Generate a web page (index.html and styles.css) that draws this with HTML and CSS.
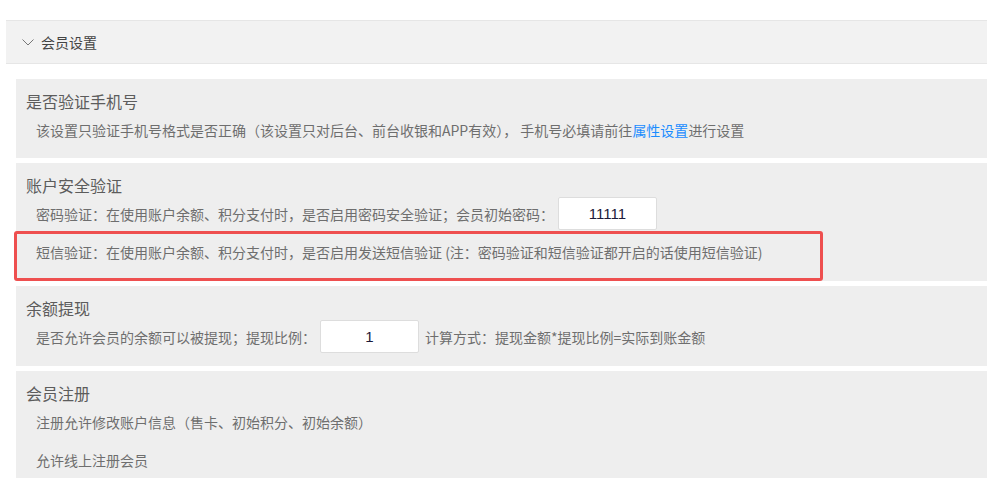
FILE: index.html
```html
<!DOCTYPE html>
<html>
<head>
    <title>会员设置</title>
    <link rel="stylesheet" href="styles.css">
</head>
<body>
    <div class="panel-head">
        <svg class="chevron" width="12" height="7" viewBox="0 0 12 7">
            <path d="M0.5 0.5 L6 6 L11.5 0.5" fill="none" stroke="#777" stroke-width="1"/>
        </svg>
        <span>会员设置</span>
    </div>

    <div class="sections">
        <div class="section">
            <div class="section-title">是否验证手机号</div>
            <div class="row">该设置只验证手机号格式是否正确（该设置只对后台、前台收银和APP有效）， 手机号必填请前往<a class="link" href="#">属性设置</a>进行设置</div>
        </div>

        <div class="section section-tight">
            <div class="section-title">账户安全验证</div>
            <div class="row row-input">
                <span>密码验证：在使用账户余额、积分支付时，是否启用密码安全验证；会员初始密码：</span>
                <input class="field" type="text" value="11111">
            </div>
            <div class="row highlight">短信验证：在使用账户余额、积分支付时，是否启用发送短信验证 (注：密码验证和短信验证都开启的话使用短信验证)</div>
        </div>

        <div class="section section-ratio">
            <div class="section-title">余额提现</div>
            <div class="row row-input">
                <span>是否允许会员的余额可以被提现；提现比例：</span>
                <input class="field field-ratio" type="text" value="1">
                <span>计算方式：提现金额*提现比例=实际到账金额</span>
            </div>
        </div>

        <div class="section">
            <div class="section-title">会员注册</div>
            <div class="row">注册允许修改账户信息（售卡、初始积分、初始余额）</div>
            <div class="row row-last">允许线上注册会员</div>
        </div>
    </div>
</body>
</html>
```

FILE: styles.css
```css
body {
    margin: 0;
    padding: 0;
    background: #ffffff;
    font-family: "Noto Sans CJK SC", "Microsoft YaHei", sans-serif;
    color: #6e6e6e;
    overflow: hidden;
}

.panel-head {
    margin: 20px 0 0 6px;
    height: 42px;
    display: flex;
    align-items: center;
    padding-left: 16px;
    background: #f2f2f2;
    border-top: 1px solid #e6e6e6;
    border-bottom: 1px solid #e6e6e6;
    font-size: 14px;
    color: #444444;
}

.chevron {
    margin-right: 7px;
}

.sections {
    padding: 15px 0 0 16px;
}

.section {
    background: #eeeeee;
    padding: 10px 0 17px 10px;
    margin-bottom: 5px;
}

.section-tight {
    padding-bottom: 0;
}

.section-ratio {
    padding-bottom: 13px;
}

.section-title {
    font-size: 16px;
    line-height: 24px;
    color: #5c5c5c;
}

.row {
    font-size: 14px;
    line-height: 22px;
    padding-left: 10px;
    margin-top: 6px;
    white-space: nowrap;
}

.row-input {
    display: flex;
    align-items: center;
    height: 33px;
    margin-top: 0;
}

.row-last {
    margin-top: 16px;
}

.link {
    color: #1a8cff;
    text-decoration: none;
}

.field {
    box-sizing: border-box;
    width: 99px;
    height: 33px;
    margin-left: 4px;
    border: 1px solid #dddddd;
    border-radius: 2px;
    background: #ffffff;
    text-align: center;
    font-family: "Liberation Sans", Arial, sans-serif;
    font-size: 15px;
    color: #1c1a3a;
    outline: none;
}

.field-ratio {
    margin: 0 6px 0 4px;
}

.highlight {
    box-sizing: border-box;
    width: 809px;
    margin: 1px 0 0 -12px;
    padding: 7px 0 15px 19px;
    border: 3px solid #ee4f4f;
    border-radius: 3px;
}
```
